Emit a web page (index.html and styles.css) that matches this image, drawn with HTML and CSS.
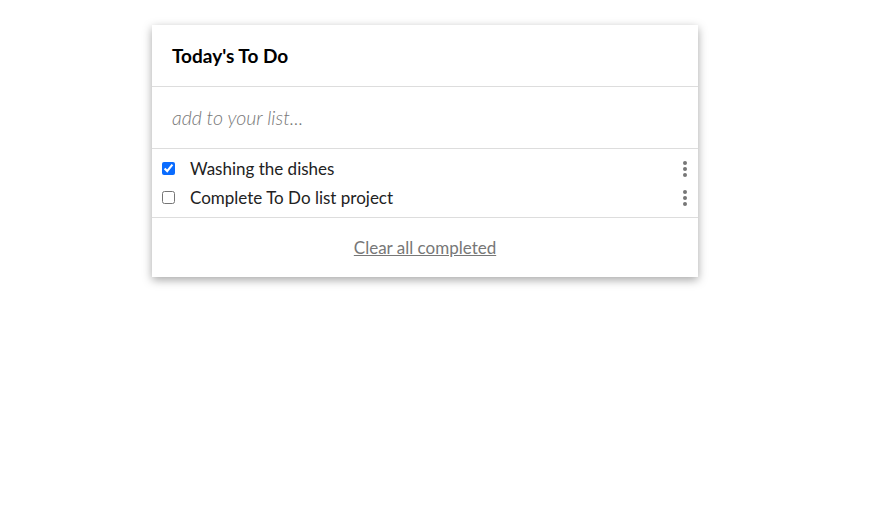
FILE: index.html
```html
<!DOCTYPE html>
<html>
<head>
<meta charset="utf-8">
<link rel="stylesheet" href="styles.css">
</head>
<body>
<div class="card">
  <div class="header">Today's To Do</div>
  <div class="add"><input class="add-input" type="text" placeholder="add to your list..."></div>
  <ul class="list">
    <li class="item">
      <input type="checkbox" class="check" checked>
      <span class="label">Washing the dishes</span>
      <span class="dots"><i></i><i></i><i></i></span>
    </li>
    <li class="item">
      <input type="checkbox" class="check">
      <span class="label">Complete To Do list project</span>
      <span class="dots"><i></i><i></i><i></i></span>
    </li>
  </ul>
  <div class="footer"><a class="clear" href="#">Clear all completed</a></div>
</div>
</body>
</html>
```
FILE: styles.css
```css
html, body { margin: 0; padding: 0; background: #fff; }
body { font-family: "Lato", "Open Sans", sans-serif; color: #222; min-height: 525px; }
.card {
  margin: 25px 0 20px 152px;
  width: 546px;
  background: #fff;
  box-shadow: 0 3px 9px rgba(0,0,0,0.35);
}
.header {
  height: 62px;
  box-sizing: border-box;
  padding: 0 20px;
  display: flex;
  align-items: center;
  font-size: 19px;
  font-weight: 700;
  color: #000;
  border-bottom: 1px solid #ddd;
}
.add {
  height: 62px;
  box-sizing: border-box;
  border-bottom: 1px solid #ddd;
  display: flex;
  align-items: center;
}
.add-input {
  border: none;
  outline: none;
  padding: 0 20px;
  width: 100%;
  font-family: inherit;
  font-size: 19.5px;
  font-style: italic;
  color: #333;
  background: transparent;
}
.add-input::placeholder { color: #777; font-weight: 300; }
.list { list-style: none; margin: 0; padding: 5px 0 5px; border-bottom: 1px solid #ddd; }
.item {
  height: 29px;
  display: flex;
  align-items: center;
  padding: 0 10px 0 10px;
}
.check { margin: 0 15px 0 0; width: 13px; height: 13px; accent-color: #0a6cff; }
.label { flex: 1; font-size: 17px; color: #222; }
.dots { display: flex; flex-direction: column; gap: 2px; margin-right: 1px; }
.dots i { display: block; width: 4px; height: 4px; border-radius: 50%; background: #777; }
.footer { height: 59px; display: flex; align-items: center; justify-content: center; }
.clear { color: #777; font-size: 17px; text-decoration: underline; }
```
